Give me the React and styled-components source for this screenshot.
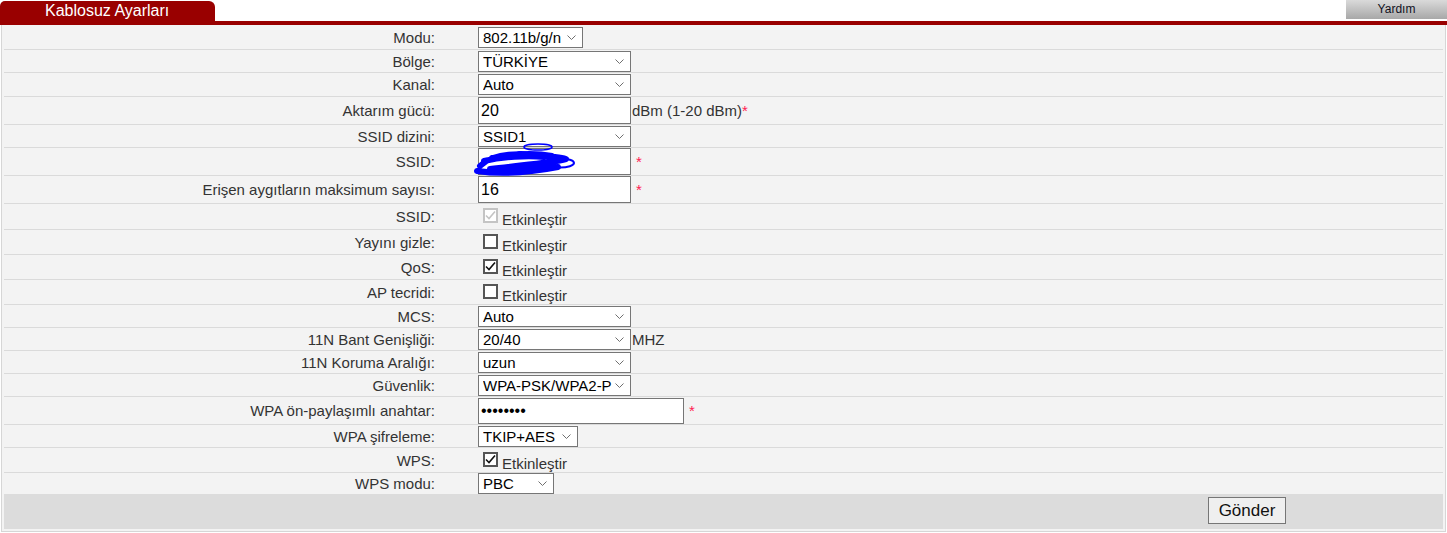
import React from "react";
import styled, { createGlobalStyle } from "styled-components";

const GlobalStyle = createGlobalStyle`
  body {
    margin: 0;
    background: #ffffff;
    font-family: "Liberation Sans", Arial, sans-serif;
  }
`;

const Header = styled.div`
  display: flex;
  align-items: flex-start;
  height: 21px;
  border-bottom: 4px solid #990000;
`;

const Tab = styled.div`
  margin-top: 1px;
  width: 215px;
  height: 20px;
  box-sizing: border-box;
  padding-left: 45px;
  background: #990000;
  border-radius: 5px 6px 0 0;
  color: #ffffff;
  font-size: 16px;
  line-height: 20px;
`;

const HelpButton = styled.div`
  margin-left: auto;
  width: 101px;
  height: 19px;
  background: linear-gradient(#dadada, #a8a8a8);
  color: #111122;
  font-size: 12px;
  line-height: 19px;
  text-align: center;
`;

const Panel = styled.div`
  margin: 0 1px;
  padding: 0 2px 2px;
  border: 1px solid #d6d6d6;
  border-top: 0;
  background: #f3f3f3;
`;

const Row = styled.div`
  display: grid;
  grid-template-columns: 436px 1fr;
  align-items: center;
  height: ${(p) => p.$h}px;
  box-sizing: border-box;

  & + & {
    border-top: 1px solid #dadada;
  }
`;

const Label = styled.div`
  padding-right: 5px;
  text-align: right;
  color: #333333;
  font-size: 15px;
`;

const Value = styled.div`
  position: relative;
  display: flex;
  align-items: center;
  padding-left: 38px;
  color: #333333;
  font-size: 15px;
`;

const SelectWrap = styled.span`
  position: relative;
  display: inline-flex;
`;

const Select = styled.select`
  appearance: none;
  width: ${(p) => p.$w}px;
  height: 21px;
  box-sizing: border-box;
  padding: 0 18px 0 4px;
  border: 1px solid #767676;
  border-radius: 0;
  background: #ffffff;
  color: #000000;
  font-family: "Liberation Sans", Arial, sans-serif;
  font-size: 15px;
`;

const Chevron = styled.svg`
  position: absolute;
  right: 7px;
  top: 8px;
  pointer-events: none;
`;

const TextInput = styled.input`
  width: ${(p) => p.$w}px;
  height: ${(p) => p.$h}px;
  box-sizing: border-box;
  padding: 1px 2px;
  border: 1px solid #767676;
  border-radius: 0;
  background: #ffffff;
  color: #000000;
  font-family: "Liberation Sans", Arial, sans-serif;
  font-size: 16px;
`;

const Suffix = styled.span`
  margin-left: 1px;
  color: #333333;
`;

const Star = styled.span`
  margin-left: ${(p) => (p.$gap ? 5 : 0)}px;
  color: #ff2050;
`;

const CheckWrap = styled.div`
  display: flex;
  align-items: center;
  margin-left: 5px;
`;

const Box = styled.span`
  display: inline-flex;
  width: 15px;
  height: 15px;
  box-sizing: border-box;
  border: 2px solid ${(p) => (p.$disabled ? "#c4c4c4" : "#555555")};
  background: #ffffff;
  margin-top: -2px;
`;

const CheckText = styled.span`
  margin-left: 4px;
  margin-top: 6px;
  color: #333333;
`;

const Scribble = styled.svg`
  position: absolute;
  left: 32px;
  top: -6px;
`;

const Footer = styled.div`
  display: flex;
  justify-content: flex-end;
  align-items: flex-start;
  height: 35px;
  box-sizing: border-box;
  padding: 3px 157px 0 0;
  background: #dcdcdc;
`;

const SubmitButton = styled.button`
  width: 78px;
  height: 27px;
  border: 1px solid #767676;
  border-radius: 0;
  background: #efefef;
  color: #111111;
  font-family: "Liberation Sans", Arial, sans-serif;
  font-size: 17px;
  padding: 0;
`;

function CheckBox({ checked, disabled }) {
  return (
    <CheckWrap>
      <Box $disabled={disabled}>
        {checked && (
          <svg width="11" height="11" viewBox="0 0 11 11">
            <polyline
              points="1,5.5 4,8.5 10,1.5"
              fill="none"
              stroke={disabled ? "#c4c4c4" : "#111111"}
              strokeWidth="1.6"
            />
          </svg>
        )}
      </Box>
      <CheckText>Etkinleştir</CheckText>
    </CheckWrap>
  );
}

const rows = [
  { label: "Modu:", h: 24, kind: "select", value: "802.11b/g/n", w: 105 },
  { label: "Bölge:", h: 23, kind: "select", value: "TÜRKİYE", w: 153 },
  { label: "Kanal:", h: 24, kind: "select", value: "Auto", w: 153 },
  { label: "Aktarım gücü:", h: 28, kind: "input", value: "20", w: 153, ih: 27, unit: "dBm (1-20 dBm)" },
  { label: "SSID dizini:", h: 23, kind: "select", value: "SSID1", w: 153 },
  { label: "SSID:", h: 28, kind: "input", value: "", w: 153, ih: 27, star: true, hidden: true },
  { label: "Erişen aygıtların maksimum sayısı:", h: 28, kind: "input", value: "16", w: 153, ih: 27, star: true },
  { label: "SSID:", h: 26, kind: "check", checked: true, disabled: true },
  { label: "Yayını gizle:", h: 25, kind: "check" },
  { label: "QoS:", h: 25, kind: "check", checked: true },
  { label: "AP tecridi:", h: 25, kind: "check" },
  { label: "MCS:", h: 23, kind: "select", value: "Auto", w: 153 },
  { label: "11N Bant Genişliği:", h: 23, kind: "select", value: "20/40", w: 153, unit: "MHZ" },
  { label: "11N Koruma Aralığı:", h: 23, kind: "select", value: "uzun", w: 153 },
  { label: "Güvenlik:", h: 23, kind: "select", value: "WPA-PSK/WPA2-PSK", w: 153 },
  { label: "WPA ön-paylaşımlı anahtar:", h: 28, kind: "password", value: "12345678", w: 206, ih: 26, star: true },
  { label: "WPA şifreleme:", h: 23, kind: "select", value: "TKIP+AES", w: 100 },
  { label: "WPS:", h: 25, kind: "check", checked: true },
  { label: "WPS modu:", h: 22, kind: "select", value: "PBC", w: 76 },
];

function Field({ row }) {
  if (row.kind === "check") {
    return <CheckBox checked={row.checked} disabled={row.disabled} />;
  }
  const control =
    row.kind === "select" ? (
      <SelectWrap>
        <Select $w={row.w} defaultValue={row.value}>
          <option>{row.value}</option>
        </Select>
        <Chevron width="9" height="5" viewBox="0 0 9 5">
          <polyline points="0.5,0.5 4.5,4.5 8.5,0.5" fill="none" stroke="#6f6f6f" strokeWidth="1" />
        </Chevron>
      </SelectWrap>
    ) : (
      <TextInput
        type={row.kind === "password" ? "password" : "text"}
        $w={row.w}
        $h={row.ih}
        defaultValue={row.value}
        readOnly
      />
    );
  return (
    <>
      {control}
      {row.unit && (
        <Suffix>
          {row.unit}
          {row.kind === "input" && <Star>*</Star>}
        </Suffix>
      )}
      {row.star && <Star $gap>*</Star>}
      {row.hidden && (
        <Scribble width="106" height="36" viewBox="0 0 106 36">
          <g fill="none" stroke="#0000ff" strokeLinecap="round" strokeLinejoin="round">
            <path
              d="M8 24 C 20 12, 42 11, 62 13 C 76 14, 88 15, 94 17 C 80 21, 50 23, 18 27 C 34 29, 60 27, 82 23 M12 19 C 30 15, 55 13, 72 15 M5 29 C 25 32, 55 31, 86 25 M20 16 C 40 12, 60 10, 80 14"
              strokeWidth="6"
            />
            <ellipse cx="66" cy="5" rx="14" ry="3" strokeWidth="1.5" />
            <ellipse cx="88" cy="21" rx="14" ry="4.5" strokeWidth="2" />
          </g>
        </Scribble>
      )}
    </>
  );
}

export default function App() {
  return (
    <>
      <GlobalStyle />
      <Header>
        <Tab>Kablosuz Ayarları</Tab>
        <HelpButton>Yardım</HelpButton>
      </Header>
      <Panel>
        {rows.map((row, i) => (
          <Row key={i} $h={row.h}>
            <Label>{row.label}</Label>
            <Value>
              <Field row={row} />
            </Value>
          </Row>
        ))}
        <Footer>
          <SubmitButton>Gönder</SubmitButton>
        </Footer>
      </Panel>
    </>
  );
}
